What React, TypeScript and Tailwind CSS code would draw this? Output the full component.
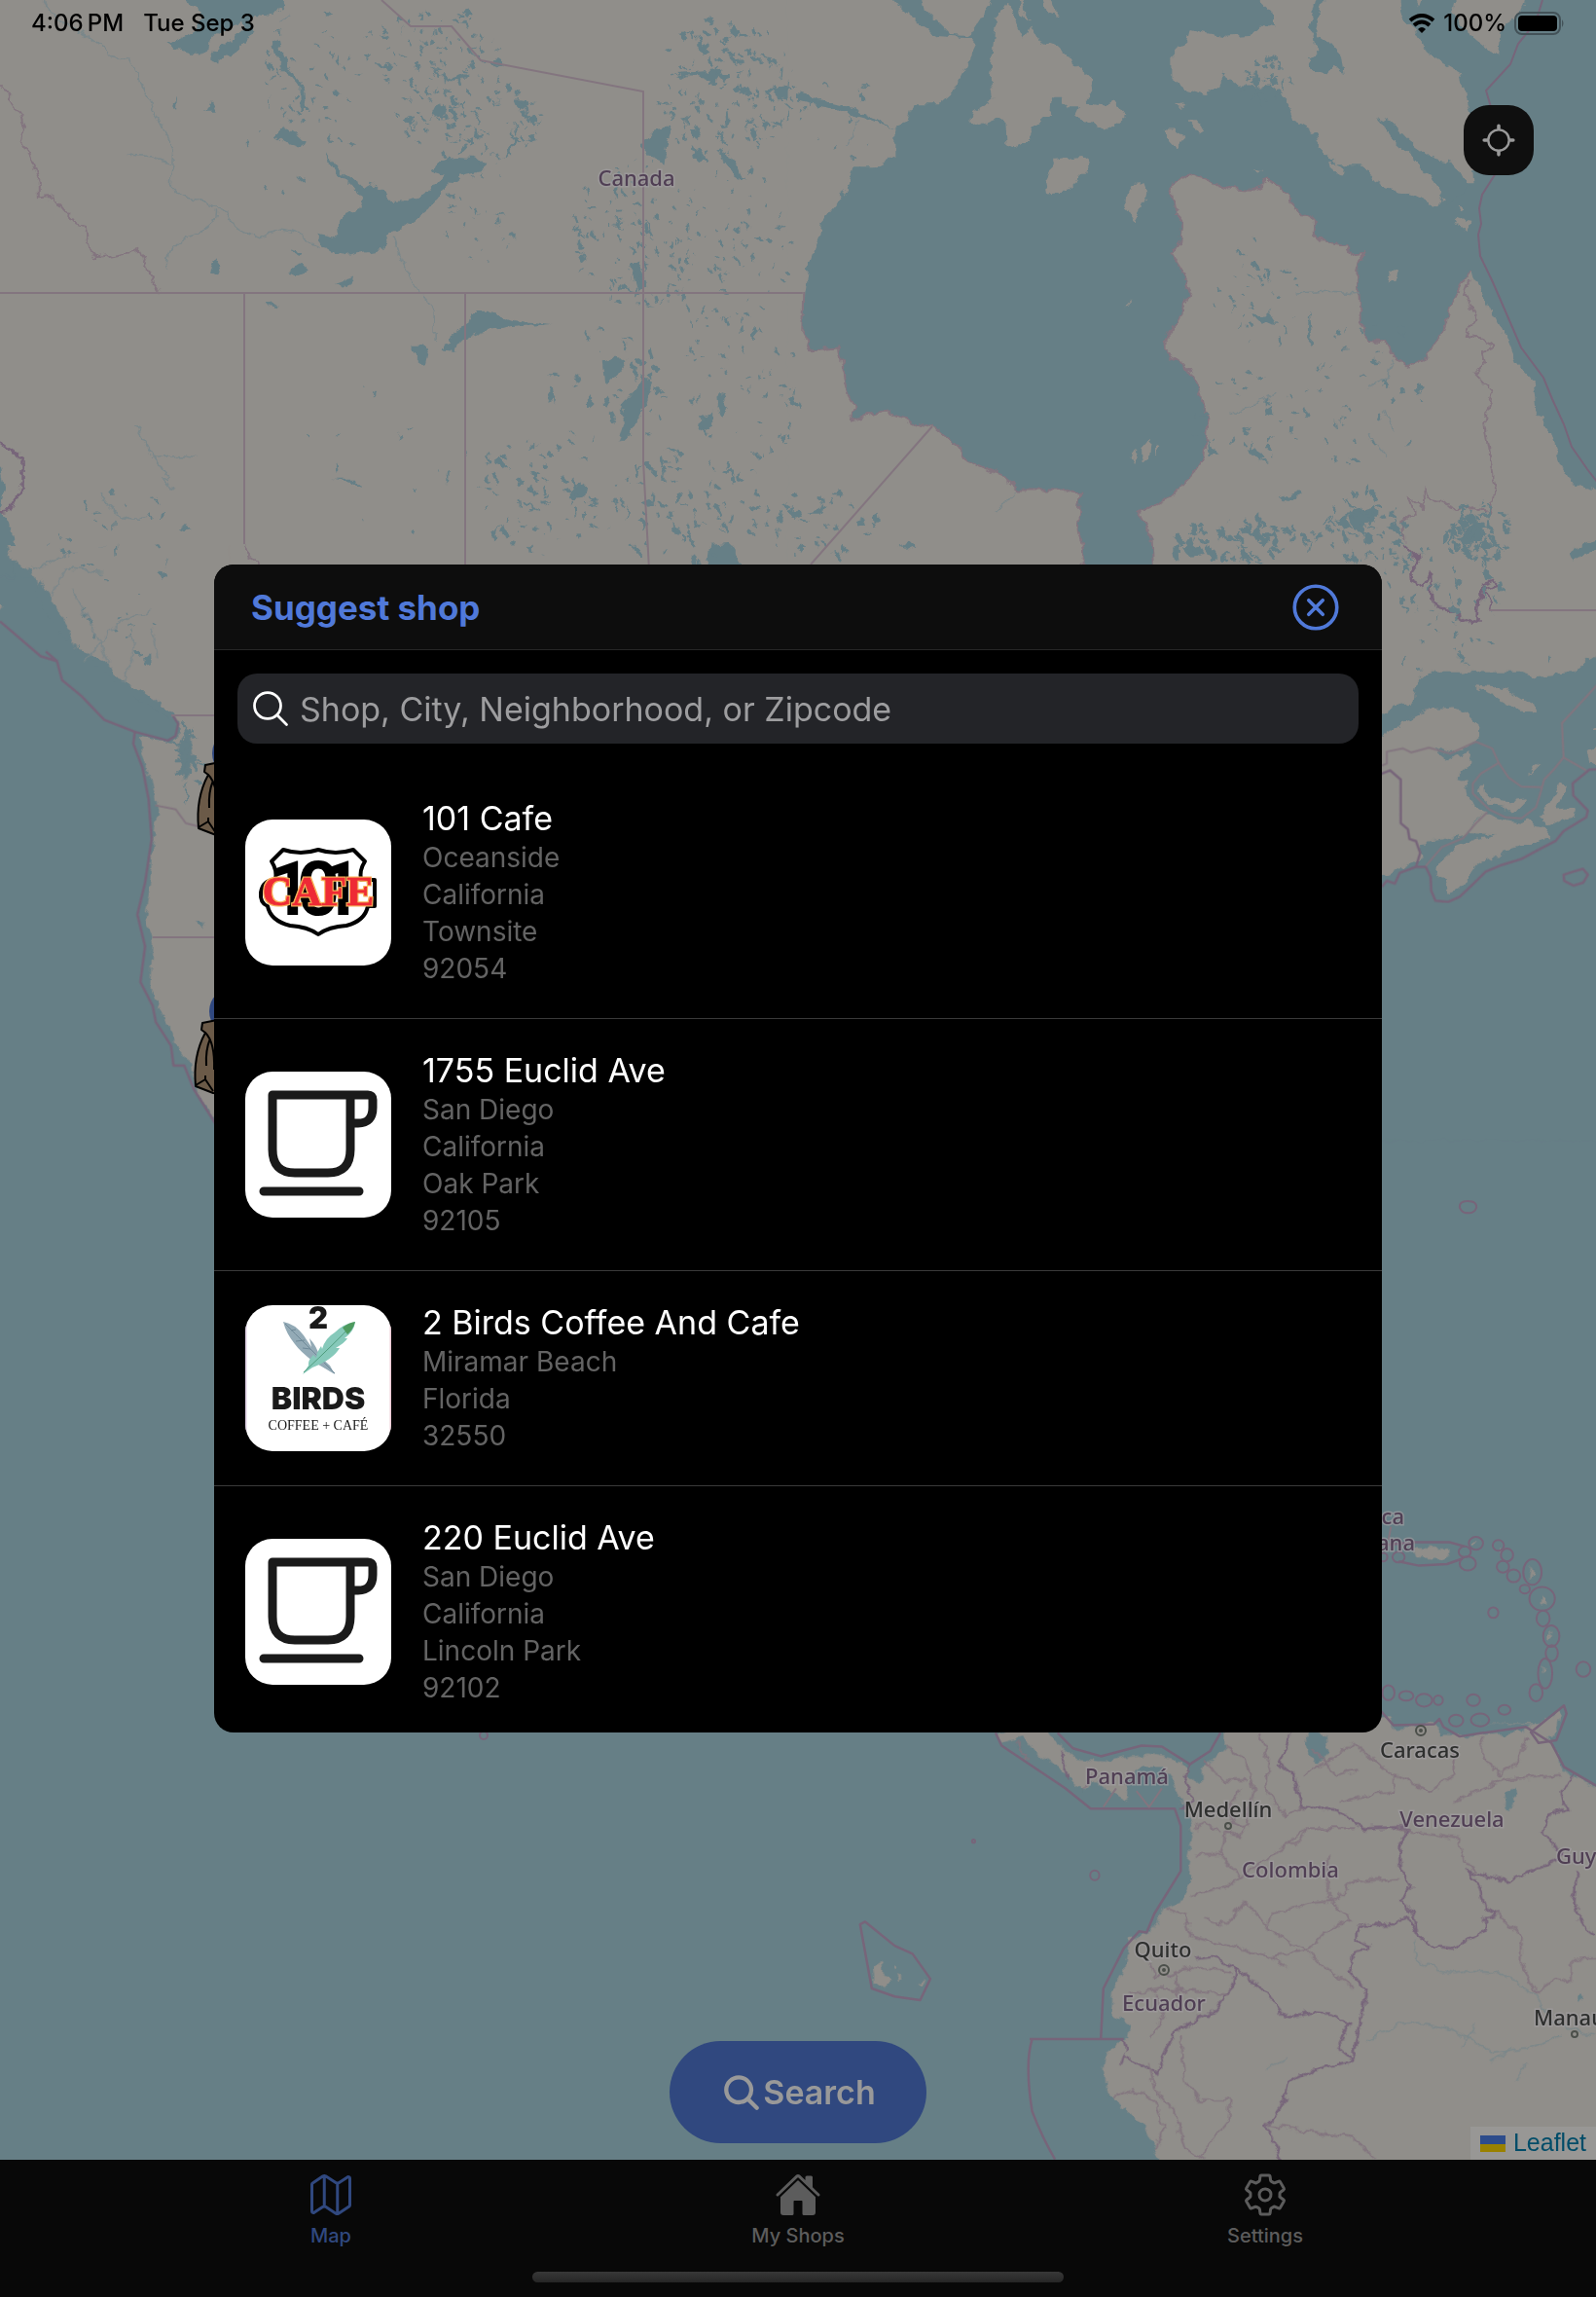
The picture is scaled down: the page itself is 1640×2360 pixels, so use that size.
import React from "react";
import {
  IoCloseCircleOutline,
  IoHome,
  IoLocateOutline,
  IoMapOutline,
  IoSearch,
  IoSearchOutline,
  IoSettingsOutline,
} from "react-icons/io5";

const LAND = "#908e8a";
const WATER = "#667f86";
const BORDER = "#77657a";
const FAINT = "#83757f";

/* Small elongated lakes scattered inside an ellipse, from a seeded generator. */
function lakes(seed: number, cx: number, cy: number, rx: number, ry: number, count: number, size: number) {
  let s = seed;
  const rnd = () => {
    s = (s * 16807) % 2147483647;
    return s / 2147483647;
  };
  let d = "";
  for (let i = 0; i < count; i++) {
    const a = rnd() * Math.PI * 2;
    const r = Math.sqrt(rnd());
    const x = cx + Math.cos(a) * r * rx;
    const y = cy + Math.sin(a) * r * ry;
    const w = size * (0.25 + rnd() * rnd() * 1.3);
    const h = size * (0.4 + rnd() * rnd() * 2.4);
    const k = (rnd() - 0.4) * size * 1.6;
    d += `M${x.toFixed(1)} ${y.toFixed(1)}l${w.toFixed(1)} ${(-h / 3).toFixed(1)}l${(k + w / 2).toFixed(1)} ${h.toFixed(1)}l${(-w).toFixed(1)} ${(h / 4).toFixed(1)}z`;
  }
  return d;
}

const LAKES =
  lakes(11, 320, 70, 50, 60, 40, 4) +
  lakes(12, 440, 50, 70, 45, 80, 4) +
  lakes(13, 480, 120, 75, 50, 110, 4) +
  lakes(14, 740, 90, 75, 75, 150, 5) +
  lakes(15, 650, 240, 65, 80, 110, 4) +
  lakes(16, 740, 250, 70, 90, 80, 4) +
  lakes(17, 490, 220, 40, 50, 25, 4) +
  lakes(18, 300, 140, 60, 90, 16, 4) +
  lakes(19, 620, 400, 60, 70, 40, 5) +
  lakes(20, 550, 510, 70, 60, 70, 5) +
  lakes(21, 700, 520, 80, 60, 90, 5) +
  lakes(22, 760, 400, 60, 90, 60, 4) +
  lakes(23, 840, 540, 60, 40, 34, 5) +
  lakes(24, 1290, 300, 45, 60, 36, 4) +
  lakes(25, 1280, 430, 60, 50, 30, 4) +
  lakes(26, 1400, 400, 60, 90, 40, 4) +
  lakes(27, 1280, 555, 80, 22, 70, 6) +
  lakes(28, 1400, 540, 40, 40, 60, 5) +
  lakes(29, 1515, 545, 36, 32, 80, 6) +
  lakes(30, 1480, 600, 60, 50, 34, 5) +
  lakes(31, 860, 120, 40, 60, 14, 4) +
  lakes(32, 400, 480, 110, 90, 14, 4) +
  lakes(33, 120, 560, 70, 60, 24, 5) +
  lakes(34, 120, 640, 50, 50, 16, 5) +
  lakes(35, 1300, 80, 30, 24, 50, 4) +
  lakes(36, 190, 780, 14, 40, 26, 5) +
  lakes(37, 1480, 660, 50, 30, 16, 4);

type Shape = { d: string; kind: "land" | "water" | "border" | "faint" | "river" };

const looks = {
  land: { fill: LAND },
  water: { fill: WATER },
  border: { fill: "none", stroke: BORDER, strokeWidth: 2.5 },
  faint: { fill: "none", stroke: FAINT, strokeWidth: 2 },
  river: { fill: "none", stroke: "#7a878a", strokeWidth: 1.5 },
};

function Paths({ shapes }: { shapes: Shape[] }) {
  return (
    <>
      {shapes.map((s, i) => (
        <path key={i} d={s.d} vectorEffect="non-scaling-stroke" strokeLinejoin="round" {...looks[s.kind]} />
      ))}
    </>
  );
}

const northWest: Shape[] = [
  { kind: "land", d: "M-60-60H1568V1568H-60z" },
  { kind: "water", d: "M365-60L365 0 390 20 400 50 385 85 355 105 328 120 345 135 392 150 410 138 412 105 430 90 455 75 475 60 480 75 450 110 420 145 415 160 427 172 440 155 470 135 490 105 500 85 490 60 500 40 540 45 560 10V-60z" },
  { kind: "water", d: "M640 412L655 460 690 510 712 545 708 570 680 582 665 610 668 640 655 650 620 640 640 680 680 698 715 688 755 678 757 640 790 625 840 575 870 520 905 480 945 468 960 450 930 430 895 428 860 440 850 470 870 478 840 530 800 548 770 550 730 495 715 510 680 480 660 450z" },
  { kind: "water", d: "M540 370L555 345 575 360 598 390 590 408 565 395zM867 950L885 940 890 910 920 880 935 850 960 850 1010 875 1085 885 1010 892 950 905 925 920 900 940 895 962 870 958zM808 940L830 940 840 965 835 998 822 985 808 960z" },
  { kind: "water", d: "M1265 1020L1283 1050 1265 1110 1245 1170 1215 1212 1225 1165 1225 1100 1250 1060zM1190 1050L1185 990 1210 970 1232 985 1210 1030zM1260 400L1285 355 1320 345 1310 400 1305 445 1280 430zM1388 1560L1395 1485 1435 1480 1458 1560z" },
  { kind: "water", d: "M1420 440L1440 430 1455 460 1465 490 1440 480zM1360 430L1375 405 1388 430 1370 445zM1515 245L1540 235 1568 245V275L1530 270zM1240 720L1255 720 1270 780 1255 795zM535 112L550 105 556 150 580 210 600 240 605 300 590 300 590 240 545 165zM845 320L860 280 880 300 860 320zM1010 270L1030 270 1038 305 1018 295zM985 435L1015 370 1020 375 1005 410zM865 200L890 215 920 200 905 225 880 220zM1120 1340L1150 1320 1145 1360 1120 1365zM650 1312H700L708 1328 680 1318zM1375 1180L1380 1140 1400 1120 1400 1160zM1410 1110L1418 1075 1430 1110 1418 1140z" },
  { kind: "water", d: "M570 680L592 688 588 696zM568 740L590 720 602 738 588 747zM660 775L695 758 688 780 675 785zM402 305L412 272 424 305zM340 295L350 262 348 305zM515 825L535 820 547 842zM1320 200L1380 195 1420 190 1400 225 1370 208zM413 742L425 705 435 728 427 752z" },
  { kind: "water", d: "M-60 1270L0 1280 8 1330 2 1390 20 1440 30 1500 50 1530 80 1580H-60z" },
  { kind: "river", d: "M85 0Q90 40 140 75 190 105 215 150L255 160 275 220 290 270 310 320 340 410 335 510 350 530 400 550 445 575 460 620 510 650 550 630 590 640 630 675M425 575Q430 620 370 645 320 680 332 740M775 650L790 720 825 800 855 850 855 930M250 425L300 430 335 445M265 1160L300 1240 340 1340M300 1250L350 1245 385 1250M195 1350Q230 1430 290 1415M170 1520Q180 1470 230 1500 270 1520 240 1545M550 60L570 40M30 1540L90 1500 100 1480" },
  { kind: "faint", d: "M0 230L40 310 48 350 40 385 60 430 78 500 78 540 105 535 150 610 170 620 175 670 185 705 230 695 275 685 300 770 315 800M480 1485L490 1520 512 1540" },
  { kind: "border", d: "M0 1210L45 1250 45 1330 20 1390 0 1395" },
];

const northEast: Shape[] = [
  { kind: "water", d: "M0-60H1640V1568H0z" },
  { kind: "land", d: "M-5-60H155L200 15 240 70 275 98 340 105 350 120 330 180 300 260 280 285 225 285 215 330 190 345 190 425 150 455 110 455 100 500 75 560 45 610 40 650 20 730 12 800 8 910 25 955 80 950 100 1080 112 1110 103 1150 175 1120 230 1155 265 1165 310 1215 330 1255 400 1300 435 1338 520 1338 555 1352 550 1450 560 1500 558 1600H-20V-60z" },
  { kind: "faint", d: "M10 800L8 910 25 955 80 950 100 1080 112 1110 103 1150 175 1120 230 1155 265 1165 310 1215 330 1255 400 1300 435 1338 520 1338 555 1352 550 1450 560 1500 558 1600" },
  { kind: "land", d: "M235-60L250 25 300 95 330 98 345 85 375 20 390-60z" },
  { kind: "land", d: "M410 10L388 60 383 130 378 220 385 270 345 305 340 335 350 345 385 325 408 330 410 395 425 405 455 385 465 340 495 310 500 265 520 265 525 290 555 290 545 320 610 358 643 318 620 275 600 285 565 280 578 250 575 210 545 175 510 130 470 110 455 75 445 105 425 50zM430-20L455 60 435 30zM475-20L500 0 510 45 490 35z" },
  { kind: "land", d: "M485 490L505 435 560 425 570 435 565 470 525 525 490 530zM645 530L655 502 678 500 685 530 678 565 662 605 643 565zM718 355L740 355 760 380 745 405 725 375zM765 330L785 330 800 360 790 368zM740 285L755 280 762 287 750 292zM890 460L915 465 905 472zM640 840L655 815 650 830zM655 1250L662 1225 668 1228 662 1268zM675 1225L690 1200 686 1250 676 1262zM700 1215L708 1220 700 1245z" },
  { kind: "land", d: "M905-60V0L935 40 935 75 910 68 890 95 840 100 800 90 770 80 765 110 735 155 735 215 765 245 800 258 835 230 835 200 870 235 930 235 960 270 975 330 1015 360 1025 400 1060 450 1110 450 1130 490 1160 515 1220 540 1255 565 1265 555 1290 500 1310 500 1330 500 1325 440 1310 350 1325 330 1310 260 1300 200 1240 150 1225 100 1190 60 1175-60z" },
  { kind: "water", d: "M1030-60L1003 75 1015 100 1020 145 1000 160 1010 190 1040 200 1055 180 1070 200 1065 150 1040 110 1015 85 1030 0 1045-60zM1138 318L1165 335 1200 385 1240 430 1290 445 1305 485 1320 510 1275 560 1250 500 1215 440 1170 380z" },
  { kind: "land", d: "M1285 30L1300-60H1440L1420 40 1380 80 1375 155 1345 125 1310 85zM1200-60H1240L1220 15zM1160 775L1165 735 1180 740 1175 765zM1288 592L1320 600 1315 635 1295 610zM1298 560L1310 575 1300 580zM1042 440L1075 460 1070 480 1055 475z" },
  { kind: "land", d: "M733 520L740 495 765 478 800 490 845 515 890 520 925 490 965 530 975 570 1015 600 1015 640 1030 660 1080 670 1090 695 1110 690 1100 740 1105 880 1125 930 1155 935 1170 970 1195 1000 1235 975 1250 940 1270 900 1285 830 1310 760 1320 740 1340 790 1365 860 1390 920 1410 990 1445 1040 1450 1120 1480 1180 1490 1230 1500 1270 1520 1320 1580 1345 1640 1380V1600H700L695 1475 670 1400 740 1350 780 1290 800 1240 805 1160 790 1070 765 1005 720 960 720 930 750 870 770 800 755 740 735 695 750 660 755 605 740 570z" },
  { kind: "faint", d: "M1320 740L1310 760 1285 830 1270 900 1250 940 1235 975 1195 1000 1170 970 1155 935 1125 930 1105 880 1100 740 1110 690 1090 695 1080 670 1030 660 1015 640 1015 600 975 570 965 530 925 490 890 520 845 515 800 490 765 478 740 495 733 520 740 570 755 605 750 660 735 695 755 740 770 800 750 870 720 930 720 960 765 1005 790 1070 805 1160 800 1240 780 1290 740 1350 670 1400 695 1475 700 1600" },
  { kind: "water", d: "M885 1230L900 1218 915 1250 905 1260zM805 1205L828 1240 808 1242zM945 1365L985 1340 990 1350 955 1372zM1080 1400L1130 1380 1140 1400 1115 1430 1110 1470 1085 1430zM1515 1525L1540 1490 1568 1480V1500L1530 1530zM885 855L930 865 940 885 910 875zM1000 920L1005 850 1012 945zM755 1500L790 1490 800 1515 765 1520zM1300 1470L1330 1420 1355 1460 1330 1490zM200 1490L215 1478 230 1495 218 1502zM20 1400L55 1380 45 1400zM0 255L110 295 150 325 190 355 130 322 40 290 0 275z" },
  { kind: "river", d: "M1105 800L1040 795 980 800M850 1130L890 1110 940 1070M1170 980L1160 1030 1120 1060M120 330L95 400M1150 1120L1170 1180M1120 1180L1160 1250M430 1340L390 1400" },
  { kind: "faint", d: "M1320 760L1310 800 1330 860 1315 920 1350 930 1370 945 1345 960 1350 990 1330 1020 1365 1070 1350 1150 1360 1250 1370 1330 1360 1400 1330 1385 1290 1390 1240 1360 1228 1330 1230 1390 1200 1355 1210 1400 1188 1420 1190 1480 1220 1530 1205 1568" },
];

const westCoast: Shape[] = [
  { kind: "water", d: "M-60 80V1568H440V80zM-60 0H20L30 90H-60z" },
  { kind: "land", d: "M15 0L25 40 70 75 80 130 105 180 140 225 150 262 190 285 215 300 250 365 290 390 340 425 352 440 350 480 340 497 275 482 285 540 300 600 310 680 300 740 295 850 285 940 300 1000 295 1110 310 1160 350 1260 375 1310 385 1370 410 1430 450 1480V0z" },
  { kind: "water", d: "M80 90L140 220 130 240 95 180 70 120zM150 262L215 330 260 385 340 440 345 425 320 400 285 370 240 345 205 290zM352 500L375 480 380 540 362 590 352 560zM385 945L402 950 395 970z" },
  { kind: "land", d: "M-30 140L5 150 -5 175H-30z" },
  { kind: "river", d: "M165 290L230 200 300 160M215 300L180 200 140 110M300 210L310 280M240 350L270 250 250 220M60 60L150 20M100 130L130 60 200 70" },
];

const westCoastLines: Shape[] = [
  { kind: "border", d: "M0 192L80 280 112 292 122 340 160 380 205 440 265 470 330 492 345 480 350 450 340 430M265 470L262 500 280 560 292 640 298 740 285 850 270 930 285 1010 276 1100 300 1160 306 1200 336 1260 341 1310 362 1310 381 1370 425 1460M112 292L90 268" },
  { kind: "faint", d: "M305 655L345 665 365 700 395 710 425 712" },
];

const atlantic: Shape[] = [
  { kind: "water", d: "M0 250H800V1500H0z" },
  { kind: "land", d: "M0-10H800V240L720 275 690 290 655 320 530 332 490 320 380 320 350 318 300 320 205 320 165 350 155 395 100 405 60 430 0 440zM0 500L60 480 130 445 200 415 280 410 330 425 362 450 360 480 320 510 275 525 215 508 265 540 335 520 325 560 290 590 320 595 325 630 345 660 390 670 350 695 310 730 240 745 180 750 185 790 150 800 100 820 0 850z" },
  { kind: "land", d: "M315 725L380 675 430 690 480 700 515 690 530 705 560 710 585 735 540 745 480 765 430 775 400 795 385 785 350 805 310 855 270 875 250 850 230 830 235 800 290 760 350 740 420 728zM545 690L610 598 628 605 600 665 660 660 655 685 620 690 570 708zM350 620L375 598 378 620 400 640 450 645 510 640 480 665 465 680 440 660 400 655zM343 350L400 355 470 375 530 405 535 420 480 418 420 390 380 370zM700 470L760 440V470zM692 520L720 503 800 500V560L700 545zM512 575L530 555 555 545 530 565z" },
  { kind: "water", d: "M645 20L680 0 720-10V10L690 25 655 40zM575 280L585 285 580 300zM220 95L240 100 230 120zM280 90L305 95 295 105z" },
  { kind: "border", d: "M130 0L175 35 148 70 150 90 185 105 210 70 215 145 240 155 270 160 310 185 340 200 355 190 360 140 370 100 405 90 415 103 370 115 395 140 390 165" },
];

const atlanticLines: Shape[] = [
  { kind: "border", d: "M0 600L60 575 85 567 118 590 118 700 140 715 145 740 165 745 178 775 165 810 195 810 210 835 212 870 225 895 265 898 300 885 345 850 380 822 430 805 490 790 540 768 595 745 620 720 690 685 695 668 650 630 648 600 700 565 760 563M60 860L75 845 100 852 115 825 165 810M620 830L650 822 680 815 695 830 680 850 650 857 622 845z" },
  { kind: "faint", d: "M60 555L75 550 75 520 125 512 150 522 205 510 270 525 350 495 400 512 420 548 450 585 490 608 555 610M195 808L245 760 310 738 350 700 385 672M420 548L365 575 340 600 340 625 390 665 440 685 490 688 535 660 550 620 560 590 590 565 620 535 615 448 760 320M620 535L690 567" },
];

const south: Shape[] = [
  { kind: "land", d: "M840 480H1145L1165 480 1170 505 1230 498 1250 490 1265 515 1320 518 1420 510 1440 497 1330 490 1450 495 1455 520 1485 530 1500 580 1640 650V1400H740L710 1310 680 1250 625 1200 605 1185 600 1140 605 1110 650 1080 655 1060 640 1050 615 1040 620 990 640 960 650 900 700 880 715 840 750 830 775 785 765 760 775 700 765 660 750 640 770 620 795 600 795 580 840 540z" },
  { kind: "land", d: "M390 511L400 530 440 520 470 550 520 580 545 610 565 620 580 600 620 620 640 640 650 630 640 600 680 575 715 575 735 600 745 625 755 640 790 615 770 590 740 560 690 550 650 555 600 565 545 560 510 530 480 490z" },
  { kind: "land", d: "M1210 165L1275 166 1280 180 1260 188 1215 184zM1445 500L1500 465 1485 525 1450 525zM148 950L165 940 168 960 185 975 170 990 150 975zM195 965L208 968 200 975zM235 980L250 970 242 986zM186 948L193 952 188 958z" },
  { kind: "land", d: "M1320 155L1335 152 1330 160zM1378 160L1385 175 1380 180zM1440 200L1445 215 1436 225zM1462 255L1470 265 1460 270zM1475 320L1482 330 1475 335zM1462 385L1468 395 1462 400z" },
  { kind: "water", d: "M995 530L1010 510 1040 520 1043 550 1020 570 1005 552zM1392 625L1408 618 1410 640 1395 658 1390 650zM1540 1000L1550 1010 1530 1015z" },
  { kind: "border", d: "M965 511L960 540 945 565 975 590 990 650 1060 655 1110 690 1180 688 1200 690 1183 720 1185 770 1205 800 1180 825 1210 850 1220 895 1200 855 1170 870 1097 873 1097 900 1125 908 1120 918 1090 925 1085 960 1115 990 1100 1080 1090 1125 1060 1100 1085 1055 1045 1037 1010 1035 960 1045 920 1000 860 950 815 930 780 935" },
  { kind: "border", d: "M1220 895L1255 912 1290 915 1350 880 1350 860 1378 850 1350 840 1340 800 1315 770 1395 790 1490 750 1500 740 1465 695 1475 665 1510 655 1500 620 1530 590M1530 770L1525 830 1540 870 1568 890M860 950L855 985 820 1030 740 1070 720 1110 705 1150 640 1115 635 1130M640 1085L645 1110M1090 1125L1010 1145 965 1165 950 1210 920 1250 950 1310M770 570L760 600 775 640 750 655M520 545L530 600" },
  { kind: "faint", d: "M840 540L880 560 895 620 885 680 870 705 840 700 830 740 870 780 920 750 960 720 1000 690 1095 690M905 511L925 560 920 620 960 670 990 650M1000 690L985 720 960 720M870 780L840 800 770 815M880 825L925 880 930 850 1010 830 1055 825 1090 790 1180 785M1042 740V820L1085 860 1035 885 1000 920 925 880M880 825L840 870 800 860M720 840L760 850 770 890 810 900 930 930 1000 920 1030 945M1030 945L1090 990M930 930L960 950M990 590L1050 560 1090 530 1170 590 1170 620 1060 640M1170 590L1240 620 1290 590 1290 540M1340 520L1350 560 1380 590 1420 560 1430 520M1180 690L1240 700 1300 710 1310 750 1330 770M1290 640L1380 600 1500 590M1375 850L1420 890 1420 940 1450 1000 1490 970 1520 980 1520 935 1568 933M690 940L700 970 780 950 850 960M650 1000L720 990 850 1000M720 1040L690 1080M750 1080L760 1160 790 1200 850 1200 845 1240 810 1280 790 1310M620 1195L660 1180 700 1200 720 1250 700 1290M690 1130L700 1180 740 1220 760 1290 800 1310M920 1245L1090 1270 1135 1310M430 530L450 560M560 620L580 590M780 690L800 680 830 700M780 740L830 740M800 560L830 600 880 600M850 860L880 825M700 1000L720 1040M740 960L750 1010M1010 540L1060 590 1100 580M870 620L840 660 880 690" },
  { kind: "river", d: "M1210 900Q1200 950 1290 960 1350 950 1400 970L1450 1005 1480 1050 1568 1080M1120 1090Q1180 1040 1260 1060 1320 1080 1360 1110L1440 1100 1500 1080M1360 1130L1400 1105M1410 1165L1430 1130M920 1140L960 1120M1330 1060L1305 1100" },
];

const southLines: Shape[] = [
  { kind: "border", d: "M388 511L400 535 525 615 575 653 740 653 752 685 752 770 700 850 685 885 670 883 640 915 600 990 595 1085M510 511L540 540 595 555 675 535 715 537 770 570 810 545 830 511M122 870L132 865 190 910 225 925 260 972 240 1012 190 1005 145 990z" },
  { kind: "border", d: "M1145 470L1170 497 1250 495 1260 485 1268 500 1300 518 1340 512 1430 500 1480 530 1505 575 1568 610M1440 510L1505 460 1510 475 1490 525 1455 530z" },
  { kind: "border", d: "M455 1085L640 1085M460 1085Q445 1130 460 1220 480 1270 505 1310" },
  { kind: "faint", d: "M600 650L625 615M665 620L690 650 715 615M1165 125L1160 150" },
  { kind: "border", d: "M1145 160L1210 154 1280 154 1310 162M1180 190L1220 198 1275 195 1305 185" },
];

/* Island rings: x, y, rx, ry */
const rings = [
  [1160, 436, 12, 14], [1195, 442, 14, 9], [1230, 450, 16, 12], [1258, 450, 9, 9], [1327, 450, 13, 11], [1293, 488, 14, 11],
  [1340, 487, 18, 12], [1388, 468, 12, 9], [1332, 156, 14, 12], [1316, 194, 16, 13], [1310, 172, 12, 10], [1376, 160, 11, 10],
  [1393, 178, 12, 12], [1385, 200, 12, 11], [1406, 217, 13, 12], [1443, 210, 18, 24], [1428, 242, 10, 8], [1462, 260, 25, 22],
  [1464, 297, 13, 15], [1480, 330, 16, 20], [1481, 362, 12, 15], [1468, 400, 14, 28], [1450, 436, 13, 16], [1366, 286, 10, 10],
  [1543, 392, 14, 14], [583, 778, 9, 9], [345, 714, 3, 3], [1180, 182, 12, 10], [1150, 182, 8, 8],
];

const cityDots = [
  { x: 1460, y: 1778, capital: true },
  { x: 1262, y: 1876, capital: false },
  { x: 1196, y: 2024, capital: true },
  { x: 1618, y: 2090, capital: false },
];

type Label = { text: string; x: number; y: number; anchor?: "start" | "end"; city?: boolean };
const labels: Label[] = [
  { text: "Canada", x: 654, y: 191 },
  { text: "Panamá", x: 1158, y: 1833 },
  { text: "Venezuela", x: 1492, y: 1877 },
  { text: "Colombia", x: 1326, y: 1929 },
  { text: "Ecuador", x: 1196, y: 2066 },
  { text: "Guyana", x: 1599, y: 1915, anchor: "start" },
  { text: "República", x: 1443, y: 1566, anchor: "end" },
  { text: "Dominicana", x: 1454, y: 1593, anchor: "end" },
  { text: "Medellín", x: 1262, y: 1867, city: true },
  { text: "Caracas", x: 1459, y: 1806, city: true },
  { text: "Quito", x: 1195, y: 2011, city: true },
  { text: "Manaus", x: 1576, y: 2081, anchor: "start", city: true },
];

function BagMarker({ x, y }: { x: number; y: number }) {
  return (
    <g transform={`translate(${x} ${y})`} stroke="#000" strokeWidth={2} strokeLinejoin="round">
      <circle cx={38} cy={-10} r={24} fill="#30487f" stroke="none" />
      <path fill="#6b5a48" d="M7 2L22-1H40V76L18 74 0 67Q-3 36 10 12L6 9z" />
      <path fill="none" d="M10 12Q20 22 19 50M15 18Q10 30 11 46M10 56L10 60 0 66M10 60L18 72" />
    </g>
  );
}

function WorldMap() {
  return (
    <svg className="absolute inset-0 h-full w-full" viewBox="0 0 1640 2219" preserveAspectRatio="xMidYMid slice" role="img" aria-label="Map of the Americas">
      <defs>
        <filter id="rough" x="-20" y="-20" width="1680" height="2260" filterUnits="userSpaceOnUse">
          <feTurbulence type="fractalNoise" baseFrequency="0.09" numOctaves={3} seed={4} result="n" />
          <feDisplacementMap in="SourceGraphic" in2="n" scale={10} xChannelSelector="R" yChannelSelector="G" />
        </filter>
      </defs>
      <rect width="1640" height="2219" fill={WATER} />
      <rect width="820" height="590" fill={LAND} />
      <g filter="url(#rough)">
        <g transform="scale(.523 .3763)"><Paths shapes={northWest} /></g>
        <g transform="translate(820 0) scale(.523 .3763)"><Paths shapes={northEast} /></g>
        <g transform="translate(0 560) scale(.523 .4082)"><Paths shapes={westCoast} /></g>
        <g transform="translate(1400 560) scale(.3333 .4082)"><Paths shapes={atlantic} /></g>
        <g transform="translate(820 1500) scale(.523 .5485)"><Paths shapes={south} /></g>
        <path d={LAKES} fill={WATER} />
      </g>
      <g transform="translate(0 560) scale(.523 .4082)"><Paths shapes={westCoastLines} /></g>
      <g transform="translate(1400 560) scale(.3333 .4082)"><Paths shapes={atlanticLines} /></g>
      <g transform="translate(820 1500) scale(.523 .5485)"><Paths shapes={southLines} /></g>
      <g fill="none" stroke={BORDER} strokeWidth={2}>
        {rings.map(([x, y, rx, ry], i) => (
          <ellipse key={i} cx={820 + x * 0.523} cy={1500 + y * 0.5485} rx={rx * 0.523} ry={ry * 0.5485} />
        ))}
        <path d="M1500 1241Q1499 1234 1508 1234 1518 1234 1517 1241 1515 1247 1508 1246 1503 1247 1500 1241z" />
        <circle cx="497" cy="1783" r="4" />
      </g>
      <g fill="none" stroke={FAINT} strokeWidth={2}>
        <path d="M0 301H824M251 301V559M478 301V585M392 0L422 27H464L494 62 661 94V474L667 585M958 438L833 580M1530 627H1640M157 963H222M176 735H222" />
        <path stroke={BORDER} d="M1585 0L1578 23 1560 45 1552 66 1527 93 1532 110M1537 178L1523 200 1520 214 1522 230 1519 241 1521 263 1534 290 1547 320 1563 357 1586 388 1595 410 1607 436 1615 459 1631 482 1645 500" />
      </g>
      {cityDots.map((c) => (
        <g key={c.x} fill="none" stroke="#4b4f4a" strokeWidth={2}>
          <circle cx={c.x} cy={c.y} r={c.capital ? 5 : 3} />
          {c.capital && <circle cx={c.x} cy={c.y} r={1} />}
        </g>
      ))}
      {labels.map((l) => (
        <text
          key={l.text}
          x={l.x}
          y={l.y}
          textAnchor={l.anchor ?? "middle"}
          className={l.city ? "fill-[#2e2f2e] font-['Noto_Sans',sans-serif] text-[22px] font-medium" : "fill-[#503f54] font-['Noto_Sans',sans-serif] text-[22px] font-medium"}
          stroke="#a09da0"
          strokeWidth={3}
          strokeOpacity={0.7}
          paintOrder="stroke"
        >
          {l.text}
        </text>
      ))}
      <BagMarker x={204} y={784} />
      <BagMarker x={201} y={1049} />
    </svg>
  );
}

function CafeLogo() {
  return (
    <svg viewBox="0 0 150 150" className="h-full w-full" aria-hidden="true">
      <defs>
        <filter id="cafe-outline" x="-20%" y="-20%" width="140%" height="140%">
          <feMorphology in="SourceAlpha" operator="dilate" radius="1.4" result="gold-shape" />
          <feFlood floodColor="#f9b55c" />
          <feComposite in2="gold-shape" operator="in" result="gold" />
          <feMerge>
            <feMergeNode in="gold" />
            <feMergeNode in="SourceGraphic" />
          </feMerge>
        </filter>
      </defs>
      <path d="M39 31Q57 37 75 31 93 37 111 31L123 43Q117 52 119 62H133V89H126Q123 104 104 109 86 110 75 118 64 110 46 109 26 104 23 89 15 86 16 75 18 62 31 62 33 52 27 43z" fill="#fff" stroke="#000" strokeWidth="4" strokeLinejoin="round" />
      <g className="font-['Roboto',sans-serif] text-[77px] font-bold" textAnchor="middle">
        <text x="46" y="98">1</text>
        <text x="75" y="98">0</text>
        <text x="98" y="98">1</text>
      </g>
      <text x="75" y="88" filter="url(#cafe-outline)" fill="#ee2b35" stroke="#ee2b35" strokeWidth="1" textAnchor="middle" className="font-['Liberation_Serif',serif] text-[42px] font-bold">CAFE</text>
    </svg>
  );
}

function CupLogo() {
  return (
    <svg viewBox="0 0 150 150" className="h-full w-full" fill="none" stroke="#1a1a1a" strokeWidth="9" strokeLinecap="round" strokeLinejoin="round" aria-hidden="true">
      <path d="M28 24V80Q28 104 51 104H85Q108 104 108 80V24zM108 24H126Q131 24 131 29V37Q131 53 116 53H108M19 123H117" />
    </svg>
  );
}

function BirdsLogo() {
  return (
    <svg viewBox="0 0 150 150" className="h-full w-full" aria-hidden="true">
      <path d="M0 20V130" stroke="#d9c9df" strokeWidth="3" />
      <path d="M150 20V130" stroke="#ecc9d4" strokeWidth="3" />
      <path d="M39 17Q51 19 60 31L68 43 66 34Q74 43 76 52L87 62 92 71 82 65 70 58Q56 47 51 40 42 29 39 17z" fill="#93aab6" />
      <path d="M41 19Q60 38 92 70M47 26L52 25M52 37L61 36M59 44L67 45" stroke="#6f8998" strokeWidth="1" fill="none" />
      <path d="M113 17Q101 19 92 28 82 34 79 45L78 42Q73 49 73 54L70 51Q64 57 65 62L59 71 69 64Q90 56 97 44L93 44Q103 38 105 34L102 34Q112 27 113 17z" fill="#86c9ba" />
      <path d="M112 18Q92 39 60 69" stroke="#4f9c7d" strokeWidth="1" fill="none" />
      <path d="M113 17Q106 18 100 23L105 30Q111 25 113 17z" fill="#4e9a5e" />
      <g fill="#1a1a1a" textAnchor="middle">
        <text x="75" y="24" className="font-['Inter',sans-serif] text-[31px] font-black">2</text>
        <text x="75" y="107" className="font-['Inter',sans-serif] text-[32px] font-black">BIRDS</text>
        <text x="75" y="128" className="font-['Liberation_Serif',serif] text-[14px]">COFFEE + CAFÉ</text>
      </g>
    </svg>
  );
}

const shops = [
  { name: "101 Cafe", lines: ["Oceanside", "California", "Townsite", "92054"], Logo: CafeLogo },
  { name: "1755 Euclid Ave", lines: ["San Diego", "California", "Oak Park", "92105"], Logo: CupLogo },
  { name: "2 Birds Coffee And Cafe", lines: ["Miramar Beach", "Florida", "32550"], Logo: BirdsLogo },
  { name: "220 Euclid Ave", lines: ["San Diego", "California", "Lincoln Park", "92102"], Logo: CupLogo },
];

const tabs = [
  { label: "Map", Icon: IoMapOutline, active: true },
  { label: "My Shops", Icon: IoHome, active: false },
  { label: "Settings", Icon: IoSettingsOutline, active: false },
];

function StatusBar() {
  return (
    <div className="relative flex items-center justify-between px-8 pt-2 text-[24px] leading-8 font-medium text-black">
      <div className="flex gap-5">
        <span>4:06{"\u2009"}PM</span>
        <span>Tue Sep 3</span>
      </div>
      <div className="flex items-center gap-2">
        <svg width="28" height="20" viewBox="0 0 28 20" fill="none" stroke="#000" strokeWidth="4" aria-label="Wi-Fi">
          <path d="M2 7Q14-3 26 7M6 12Q14 5 22 12" />
          <path d="M14 20L10 16Q14 12 18 16z" fill="#000" stroke="none" />
        </svg>
        <span>100%</span>
        <svg width="52" height="24" viewBox="0 0 52 24" aria-label="Battery full">
          <rect x="1" y="1" width="46" height="22" rx="7" fill="none" stroke="#435258" strokeWidth="2" />
          <rect x="4" y="4" width="40" height="16" rx="4" />
          <path d="M49 8Q52 12 49 16z" fill="#435258" />
        </svg>
      </div>
    </div>
  );
}

function SuggestDialog() {
  return (
    <section role="dialog" aria-labelledby="suggest-title" className="flex h-[1200px] w-[1200px] max-w-full flex-col overflow-hidden rounded-[20px] bg-black">
      <header className="flex h-[88px] shrink-0 items-center justify-between border-b border-[#262626] bg-[#0d0d0d] pr-[39px] pl-[38px]">
        <h1 id="suggest-title" className="text-[35px] leading-10 font-bold text-[#5079d9]">Suggest shop</h1>
        <button type="button" aria-label="Close" className="text-[#5079d9]">
          <IoCloseCircleOutline className="h-[58px] w-[58px]" />
        </button>
      </header>
      <div className="shrink-0 p-6">
        <label className="flex h-[72px] items-center gap-2 rounded-[20px] bg-[#232428] px-3">
          <IoSearchOutline className="h-[44px] w-[44px] shrink-0 text-white" />
          <input type="search" aria-label="Search shops" placeholder="Shop, City, Neighborhood, or Zipcode" className="min-w-0 flex-1 bg-transparent text-[34px] text-white outline-none placeholder:text-[#9d9d9f]" />
        </label>
      </div>
      <ul className="min-h-0 flex-1 overflow-hidden">
        {shops.map(({ name, lines, Logo }) => (
          <li key={name} className="flex items-center gap-8 border-b border-[#3a3a3a] px-8 py-8">
            <div className="h-[150px] w-[150px] shrink-0 overflow-hidden rounded-[28px] bg-white">
              <Logo />
            </div>
            <div>
              <h2 className="text-[34px] leading-[42px] text-white">{name}</h2>
              {lines.map((line) => (
                <p key={line} className="text-[28px] leading-[38px] text-[#636363]">{line}</p>
              ))}
            </div>
          </li>
        ))}
      </ul>
    </section>
  );
}

export default function App() {
  return (
    <div className="relative flex min-h-screen flex-col font-['Inter',sans-serif]">
      <main className="relative flex flex-1 flex-col justify-between overflow-hidden">
        <WorldMap />
        <div className="relative">
          <StatusBar />
          <div className="flex justify-end px-16 pt-[68px]">
            <button type="button" aria-label="Locate me" className="flex h-[72px] w-[72px] items-center justify-center rounded-[26px] bg-[#0f0f0f] text-[#999]">
              <IoLocateOutline className="h-[38px] w-[38px]" />
            </button>
          </div>
        </div>
        <div className="relative flex items-end justify-center pb-[17px]">
          <button type="button" className="flex h-[105px] items-center rounded-full bg-[#30487f] px-[52px] text-[34px] font-semibold text-[#999]">
            <IoSearch className="h-11 w-11" />
            Search
          </button>
          <div className="absolute right-0 bottom-0 flex h-[34px] items-center gap-2 bg-[#989795] px-[10px] font-['Liberation_Sans',sans-serif] text-[25px]">
            <svg width="26" height="17" viewBox="0 0 26 17" aria-hidden="true">
              <path fill="#2d4c8b" d="M0 0H26V9H0z" />
              <path fill="#998100" d="M0 9H26V17H0z" />
            </svg>
            <a href="#leaflet" className="text-[#004c68]">Leaflet</a>
          </div>
        </div>
      </main>
      <footer className="flex h-[141px] shrink-0 flex-col justify-between bg-[#080808] pb-[15px]">
        <nav className="flex justify-center px-[100px] pt-3">
          {tabs.map(({ label, Icon, active }) => (
            <button key={label} type="button" className={active ? "flex flex-1 flex-col items-center gap-1 text-[#30487f]" : "flex flex-1 flex-col items-center gap-1 text-[#5c5c5c]"}>
              <Icon className="h-12 w-12" />
              <span className="text-[20px] leading-7 font-medium">{label}</span>
            </button>
          ))}
        </nav>
        <div className="h-[11px] w-1/3 self-center rounded-full bg-linear-to-b from-[#383838] to-[#262626]" />
      </footer>
      <div className="absolute inset-0 flex items-center justify-center">
        <SuggestDialog />
      </div>
    </div>
  );
}
